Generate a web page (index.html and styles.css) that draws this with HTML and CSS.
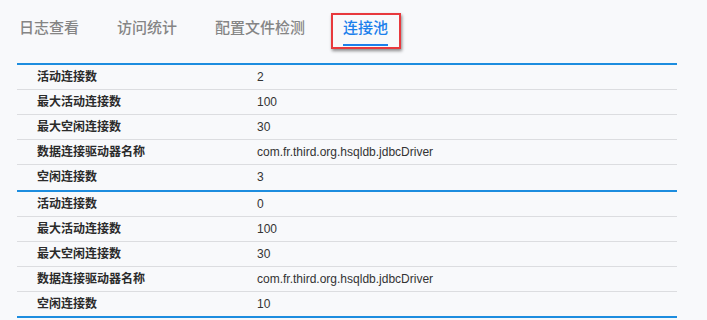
FILE: index.html
```html
<!DOCTYPE html>
<html lang="zh-CN">
<head>
    <meta charset="UTF-8">
    <title>连接池</title>
    <link rel="stylesheet" href="styles.css">
</head>
<body>
    <div class="tabs">
        <a class="tab">日志查看</a>
        <a class="tab">访问统计</a>
        <a class="tab">配置文件检测</a>
        <a class="tab active">连接池</a>
    </div>

    <div class="pool_list">
        <table class="pool">
            <tbody>
                <tr><th>活动连接数</th><td>2</td></tr>
                <tr><th>最大活动连接数</th><td>100</td></tr>
                <tr><th>最大空闲连接数</th><td>30</td></tr>
                <tr><th>数据连接驱动器名称</th><td>com.fr.third.org.hsqldb.jdbcDriver</td></tr>
                <tr><th>空闲连接数</th><td>3</td></tr>
            </tbody>
        </table>
        <table class="pool">
            <tbody>
                <tr><th>活动连接数</th><td>0</td></tr>
                <tr><th>最大活动连接数</th><td>100</td></tr>
                <tr><th>最大空闲连接数</th><td>30</td></tr>
                <tr><th>数据连接驱动器名称</th><td>com.fr.third.org.hsqldb.jdbcDriver</td></tr>
                <tr><th>空闲连接数</th><td>10</td></tr>
            </tbody>
        </table>
    </div>
</body>
</html>
```

FILE: styles.css
```css
*{padding:0;margin:0;box-sizing:border-box;}
body{background:#f8f9fb;font-family:"Liberation Sans","Noto Sans CJK SC",sans-serif;color:#333;}

.tabs{display:flex;gap:38px;padding-left:19px;height:46px;}
.tab{position:relative;margin-top:18px;height:28px;font-size:15px;line-height:20px;color:#858585;font-weight:500;cursor:pointer;}
.tab.active{color:#1b80ec;border-bottom:2px solid #1b80ec;}
.tab.active::after{content:"";position:absolute;left:-12px;right:-13px;top:-5px;bottom:-5px;border:2px solid #e8393d;box-shadow:1px 2px 3px rgba(0,0,0,0.45);}

.pool_list{margin:17px 0 0 17px;width:660px;}
.pool{width:100%;border-collapse:collapse;border-top:2px solid #1d8ddf;}
.pool:last-child{border-bottom:2px solid #1d8ddf;}
.pool tr{height:25px;border-bottom:1px solid #dcdde0;}
.pool tr:last-child{border-bottom:none;}
.pool th,.pool td{font-size:12px;text-align:left;padding:0;line-height:24px;}
.pool th{width:240px;padding-left:20px;font-weight:bold;color:#2b2b2b;}
.pool td{font-weight:normal;color:#333;}
```
